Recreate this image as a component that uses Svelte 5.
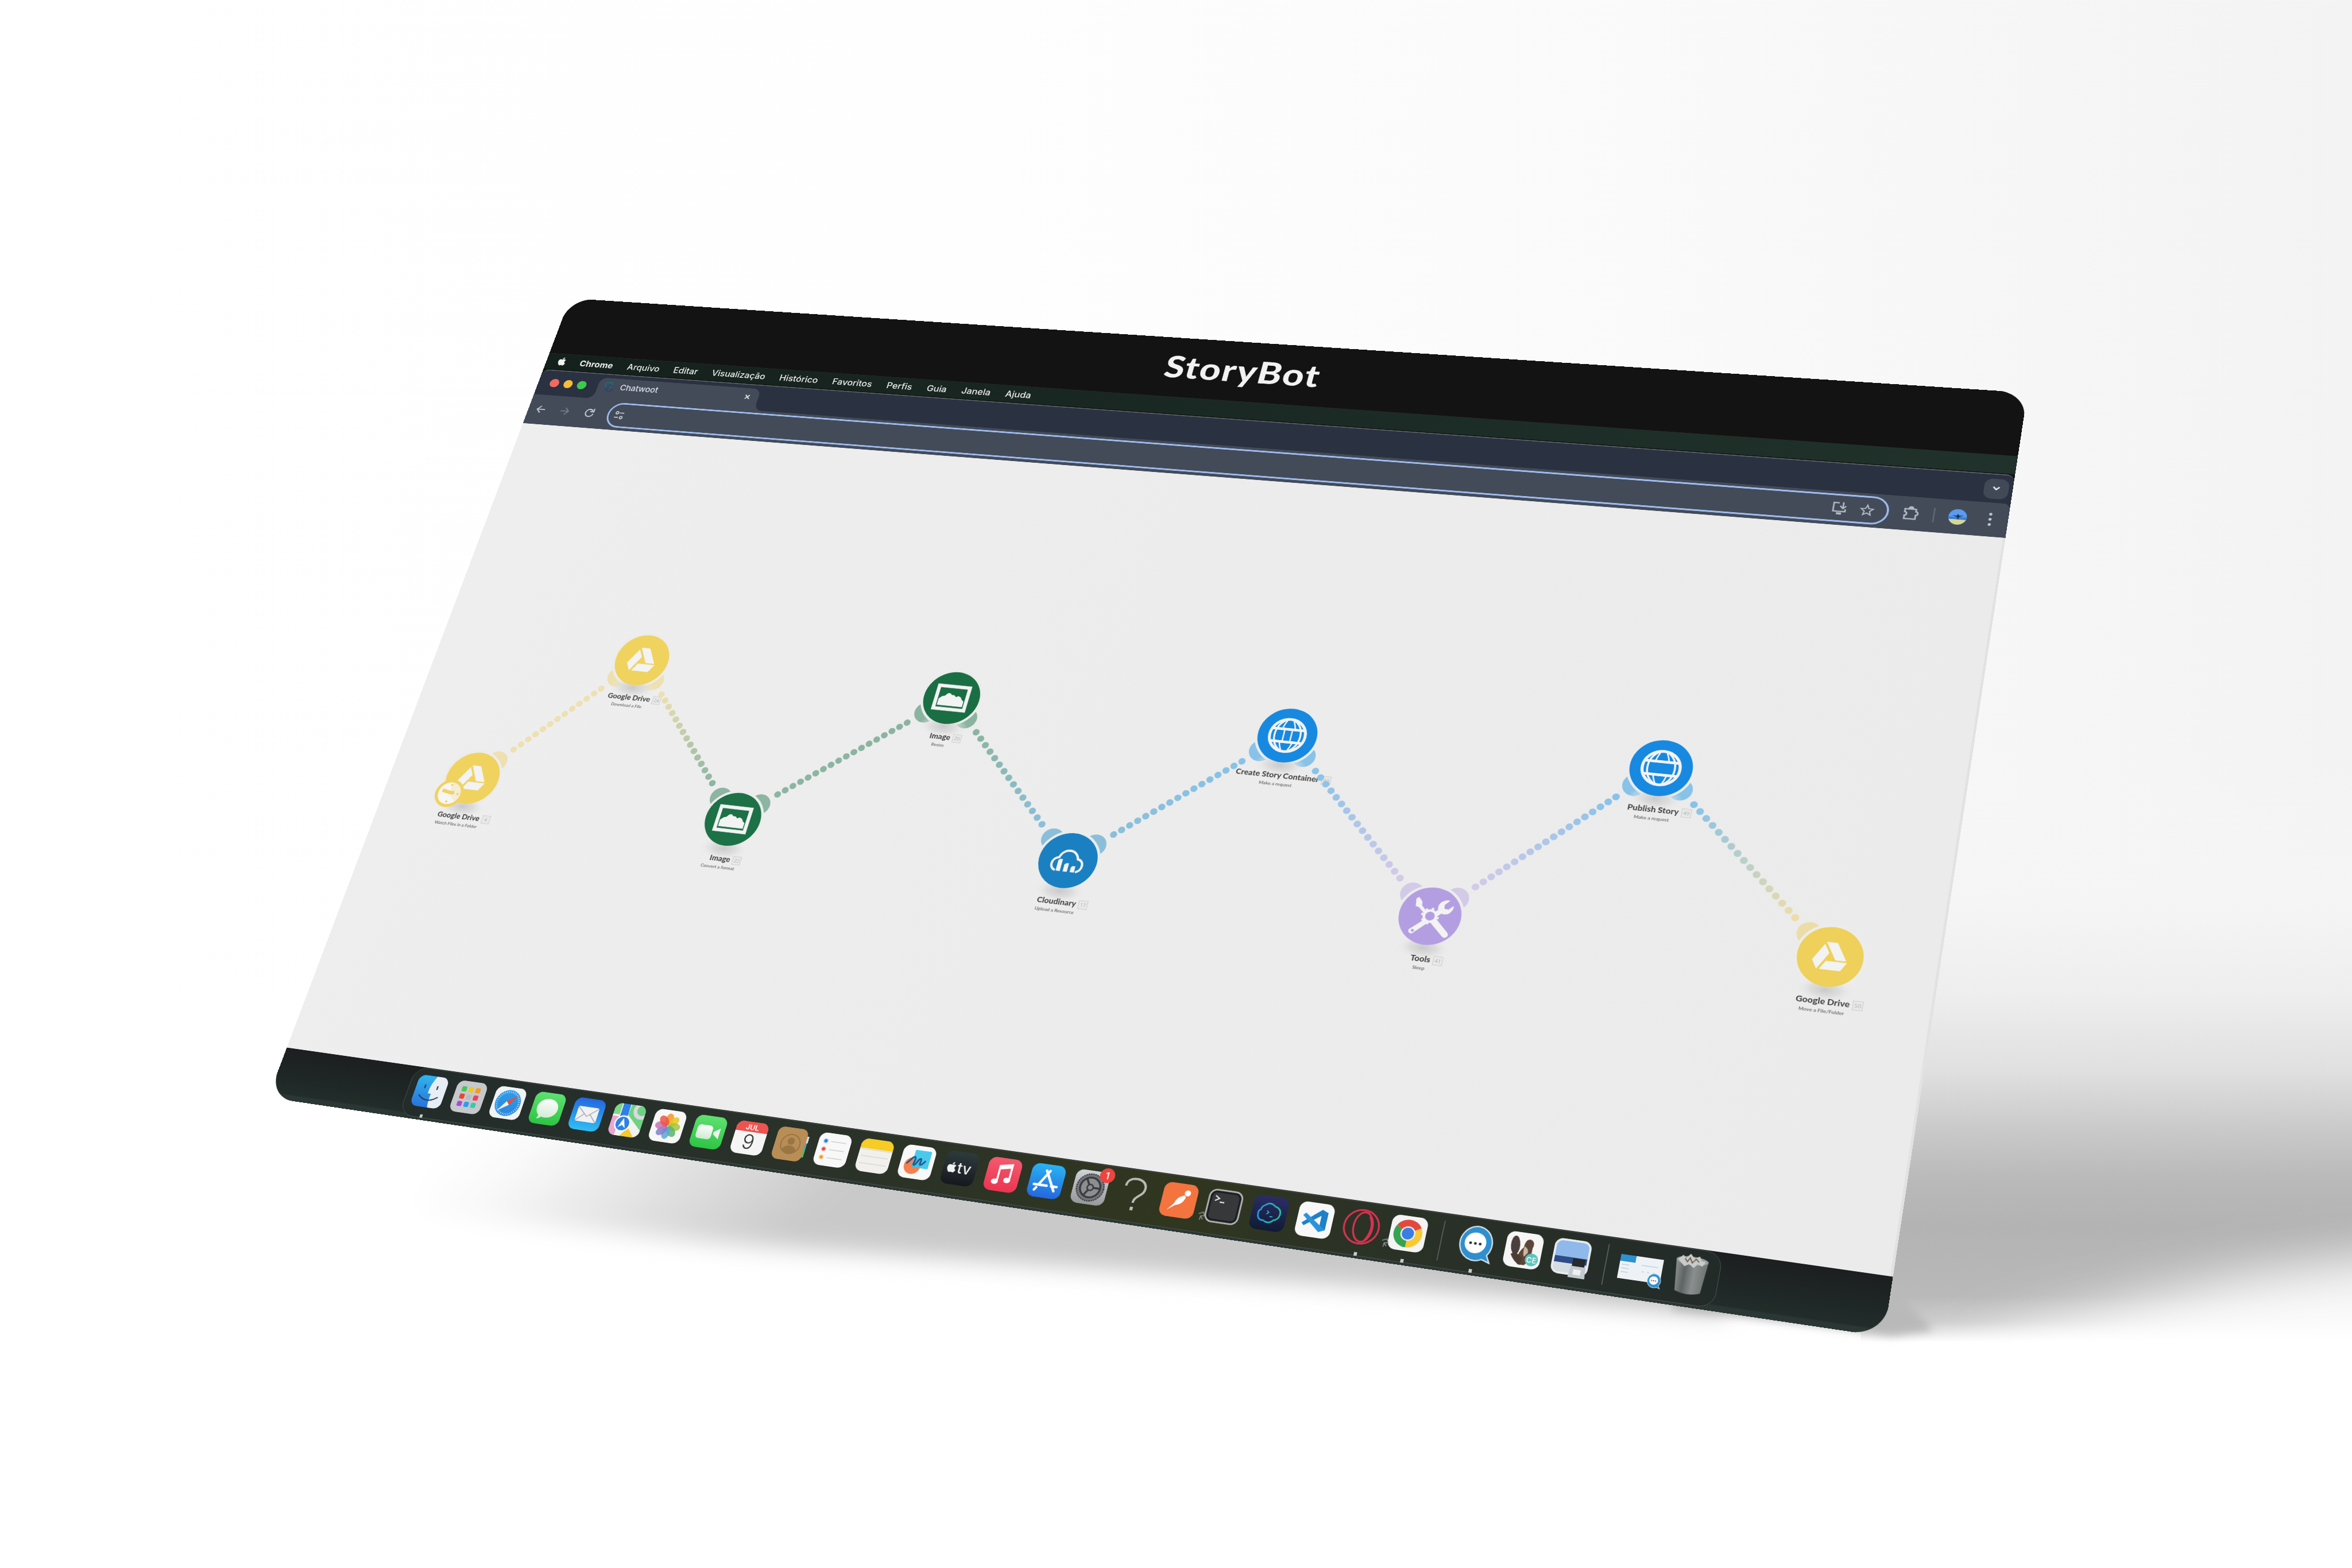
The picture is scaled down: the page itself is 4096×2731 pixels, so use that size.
<script>
  // Flat size of the tilted display
  const W = 3280;
  const H = 2000;
  const SCALE = 4096 / 4500;
  const TOP = 343.5;

  // Corner positions of the display inside the 4500 x 3000 scene: TL, TR, BR, BL
  const corners = [
    [1090.9, 570.8],
    [3879.3, 751.5],
    [3604.3, 2557.6],
    [512.8, 2100.0]
  ].map(([x, y]) => [x * SCALE, y * SCALE]);

  // Projective mapping of the W x H rectangle on the four corners
  function projection([[x0, y0], [x1, y1], [x2, y2], [x3, y3]]) {
    const dx1 = x1 - x2, dx2 = x3 - x2, sx = x0 - x1 + x2 - x3;
    const dy1 = y1 - y2, dy2 = y3 - y2, sy = y0 - y1 + y2 - y3;
    const den = dx1 * dy2 - dx2 * dy1;
    const g = (sx * dy2 - dx2 * sy) / den;
    const h = (dx1 * sy - sx * dy1) / den;
    const a = x1 - x0 + g * x1, b = x3 - x0 + h * x3;
    const d = y1 - y0 + g * y1, e = y3 - y0 + h * y3;
    return `matrix3d(${[a / W, d / W, 0, g / W, b / H, e / H, 0, h / H, 0, 0, 1, 0, x0, y0, 0, 1].map((n) => n.toFixed(10)).join(',')})`;
  }
  const transform = projection(corners);

  const menus = ['Arquivo', 'Editar', 'Visualização', 'Histórico', 'Favoritos', 'Perfis', 'Guia', 'Janela', 'Ajuda'];

  const nodes = [
    { x: 194.7, y: 1233, c: '#f0d25f', l: '#eee0b0', icon: 'drive', name: 'Google Drive', sub: 'Watch Files in a Folder', n: 4, clock: true },
    { x: 488.2, y: 912, c: '#f0d25f', l: '#eee0b0', icon: 'drive', name: 'Google Drive', sub: 'Download a File', n: 24 },
    { x: 813.4, y: 1259.2, c: '#1c7147', l: '#8cb5a2', icon: 'image', name: 'Image', sub: 'Convert a format', n: 22 },
    { x: 1208.2, y: 928, c: '#1a6e43', l: '#8bb4a0', icon: 'image', name: 'Image', sub: 'Resize', n: 20 },
    { x: 1554.9, y: 1265.8, c: '#1a80c1', l: '#8bbfd9', icon: 'cloud', name: 'Cloudinary', sub: 'Upload a Resource', n: 17 },
    { x: 1939, y: 936.4, c: '#1789e1', l: '#88c2e8', icon: 'globe', mid: true, name: 'Create Story Container', sub: 'Make a request', n: 40 },
    { x: 2309.5, y: 1295.4, c: '#b49ee2', l: '#d3cae8', icon: 'tools', name: 'Tools', sub: 'Sleep', n: 41 },
    { x: 2696.7, y: 925.4, c: '#1789e1', l: '#88c2e8', icon: 'globe', name: 'Publish Story', sub: 'Make a request', n: 49 },
    { x: 3078.2, y: 1283.9, c: '#eed05a', l: '#ecdda8', icon: 'drive', name: 'Google Drive', sub: 'Move a File/Folder', n: 50 }
  ].map((n) => ({ ...n, y: n.y - TOP }));

  const steps = [12, 14, 17, 14, 16, 16, 18, 16];

  function mix(a, b, t) {
    const p = (s, i) => parseInt(s.slice(i, i + 2), 16);
    return `rgb(${[1, 3, 5].map((i) => Math.round(p(a, i) + (p(b, i) - p(a, i)) * t)).join(',')})`;
  }

  const lobes = [];
  const dots = [];
  steps.forEach((count, i) => {
    const p = nodes[i], q = nodes[i + 1];
    const len = Math.hypot(q.x - p.x, q.y - p.y);
    const ux = (q.x - p.x) / len, uy = (q.y - p.y) / len;
    lobes.push({ x: p.x + ux * 62, y: p.y + uy * 62, c: p.l }, { x: q.x - ux * 62, y: q.y - uy * 62, c: q.l });
    for (let k = 0; k <= count; k++) {
      const t = k / count;
      const d = 105 + (len - 210) * t;
      dots.push({ x: p.x + ux * d, y: p.y + uy * d, c: mix(p.l, q.l, t) });
    }
  });

  const dock = [
    'finder*', 'launchpad', 'safari', 'messages', 'mail', 'maps', 'photos', 'facetime', 'calendar', 'contacts',
    'reminders', 'notes', 'freeform', 'tv', 'music', 'appstore', 'settings', 'unknown', 'postman', 'terminal',
    'termius', 'vscode', 'opera*', 'chrome*', '|', 'chat*', 'beaver', 'preview', '|', 'window', 'trash'
  ].map((s) => ({ id: s.replace('*', ''), run: s.endsWith('*') }));

  const pads = ['#43c759', '#f5c51b', '#f39a26', '#ea4438', '#b9bcc2', '#ef4063', '#a54be0', '#2f9bf0', '#35cfa0'];
  const petals = ['#f7941e', '#e8c51d', '#a6c63c', '#5cb56a', '#5aa7d6', '#7d80cc', '#c276b4', '#ee5448'];
  const ticks = Array.from({ length: 36 }, (_, i) => i * 10);
</script>

{#snippet apple()}
  <path d="M17.05 20.28c-.98.95-2.05.8-3.08.35-1.09-.46-2.09-.48-3.24 0-1.44.62-2.2.44-3.06-.35C2.79 15.25 3.51 7.59 9.05 7.31c1.35.07 2.29.74 3.08.8 1.18-.24 2.31-.93 3.57-.84 1.51.12 2.65.72 3.4 1.8-3.12 1.87-2.38 5.98.48 7.13-.57 1.5-1.31 2.99-2.54 4.09zM12.03 7.25c-.15-2.23 1.66-4.07 3.74-4.25.29 2.58-2.34 4.5-3.74 4.25z" />
{/snippet}

{#snippet bubble()}
  <path d="M33 1a31 33 0 0 1 25 53l7 14-15-5A31 33 0 1 1 33 1z" fill="#2f8fce" stroke="#d6e4ec" stroke-width="2.500" />
  <circle cx="33" cy="33" r="20" fill="#fff" />
  <g fill="#26323c"><circle cx="24" cy="34" r="2.600" /><circle cx="33" cy="34" r="2.600" /><circle cx="42" cy="34" r="2.600" /></g>
{/snippet}

{#snippet clip()}
  <path d="M-11 54l9-4 3 7-7 1-1 8M-7 58l6 6" fill="none" stroke="#8b8f8c" stroke-width="1.800" />
{/snippet}

{#snippet glyph(node)}
  {#if node.icon === 'drive'}
    <path fill="#f3f3f3" transform="scale(3) translate(-12 -12)" d="M7.71 3.5L1.15 15l3.43 6 6.55-11.5zM9.73 15L6.3 21h13.12l3.43-6zM22.28 14L15.42 2H8.58l6.85 12z" />
  {:else if node.icon === 'image'}
    <rect x="-34" y="-27" width="68" height="54" fill="none" stroke="#f3f3f3" stroke-width="8" />
    <path fill="#f3f3f3" d="M-28 19V4l6-6 6-2 5-6 5-1 5 4 5 0 5 4 5-3 6 3 3 5 5 4v13z" />
  {:else if node.icon === 'cloud'}
    <path fill="none" stroke="#f3f3f3" stroke-width="5" stroke-linecap="round" stroke-linejoin="round" d="M-24 23c-7-3-9-10-8-16 1-7 6-11 12-12 3-10 10-17 20-17 10 0 18 7 20 17 8 1 12 7 12 14 0 7-4 12-9 14" />
    <g fill="#f3f3f3"><path d="M-20 25V1l4-3h5v27zM-5 25V9l4-3h5v19zM10 25V14l3-3h6v14z" /></g>
  {:else if node.icon === 'globe'}
    <g fill="none" stroke="#f3f3f3" stroke-width="4">
      <circle r="37" stroke-width="6" />
      <path d="M-34-14H34M-34 15H34" stroke-width="6" />
      <ellipse rx="27" ry="36" />
      <path d="M-7-33q-4 8-6 17M7-33q4 8 6 17M-13 17q2 9 6 16M13 17q-2 9-6 16" stroke-width="3" />
      {#if node.mid}<path d="M-8-14V15M8-14V15" stroke-width="3" />{/if}
    </g>
  {:else}
    <g fill="#f3f3f3">
      <path d="M-34-34l5-4 8 9 1 8 12 13-4 4-13-12-7-2z" />
      <path d="M-10 9l7 7-23 23q-4 4-8 0t0-8zM-31 34a3 3 0 1 0 6 0a3 3 0 1 0-6 0" fill-rule="evenodd" />
      <path d="M11 2L3-6 13-15q-3-13 6-19 7-5 14-3l-9 10 1 8 8 1 9-9q2 8-4 15-6 7-17 4z" />
      <path d="M3 13l10-9 28 27q4 5 0 9t-9 0z" />
    </g>
    <circle r="12" fill="#b49ee2" stroke="#f3f3f3" stroke-width="5" />
    <circle r="16" fill="none" stroke="#f3f3f3" stroke-width="4" stroke-dasharray="5 7.56" />
  {/if}
{/snippet}

{#snippet appIcon(id)}
  {#if id === 'finder'}
    <g clip-path="url(#tile)">
      <rect width="68" height="68" fill="url(#gFinder)" />
      <path d="M40 0C33 14 30 26 31 38h7c-1 10 0 20 2 30h28V0z" fill="#e9edf4" />
      <path d="M13 44q21 17 42 0" fill="none" stroke="#26405c" stroke-width="2.6" stroke-linecap="round" />
      <path d="M20 21v6M48 21v6" stroke="#26405c" stroke-width="3" stroke-linecap="round" />
    </g>
  {:else if id === 'launchpad'}
    <rect width="68" height="68" rx="15" fill="#c6c8cb" />
    {#each pads as c, i}<rect x={13 + (i % 3) * 15.5} y={12 + Math.floor(i / 3) * 16} width="11" height="11" rx="3" fill={c} />{/each}
  {:else if id === 'safari'}
    <rect width="68" height="68" rx="15" fill="#f1f2f4" />
    <circle cx="34" cy="34" r="28" fill="url(#gSafari)" />
    {#each ticks as t}<path d="M34 8v4" stroke="#d8efff" stroke-width="1.2" transform="rotate({t} 34 34)" />{/each}
    <path d="M53 15L37.500 37.500 30.500 30.500z" fill="#ee4a40" /><path d="M15 53L30.500 30.500 37.500 37.500z" fill="#f4f4f4" />
  {:else if id === 'messages'}
    <rect width="68" height="68" rx="15" fill="url(#gGreen)" />
    <path d="M34 13c13 0 23 8.500 23 20s-10 20-23 20c-3 0-5 0-8-1-2 3-6 5-10 5 2-2 3-5 3-8-5-4-8-9-8-16 0-11.500 10-20 23-20z" fill="url(#gWhite)" />
  {:else if id === 'mail'}
    <rect width="68" height="68" rx="15" fill="url(#gMail)" />
    <rect x="11" y="18" width="46" height="32" rx="4" fill="#f0f1f2" />
    <path d="M12 20l22 18 22-18M12 49l16-16M56 49L40 33" fill="none" stroke="#a9adb3" stroke-width="1.8" />
  {:else if id === 'maps'}
    <g clip-path="url(#tile)">
      <rect width="68" height="68" fill="#f2f2ef" />
      <path d="M0 0h14v24H0z" fill="#7ed886" /><path d="M0 28h16v40H0z" fill="#e8a6d3" />
      <path d="M34 0h34v52L32 22z" fill="#6fd282" />
      <circle cx="60" cy="10" r="15" fill="none" stroke="#d7dade" stroke-width="8" />
      <path d="M16 0h16v36H16z" fill="#2f7fe6" />
      <path d="M28 68l12-20 18 20z" fill="#f6c92c" />
      <circle cx="26" cy="42" r="16" fill="#2b82e8" stroke="#fff" stroke-width="3" />
      <path d="M26 30l8 21-8-6-8 6z" fill="#fff" />
    </g>
  {:else if id === 'photos'}
    <rect width="68" height="68" rx="15" fill="#f7f7f7" />
    {#each petals as c, i}<ellipse cx="34" cy="20" rx="8.500" ry="13" fill={c} opacity=".85" transform="rotate({i * 45} 34 34)" />{/each}
  {:else if id === 'facetime'}
    <rect width="68" height="68" rx="15" fill="url(#gGreen)" />
    <rect x="9" y="20" width="33" height="29" rx="7" fill="url(#gWhite)" /><path d="M45 32l13-9v23l-13-9z" fill="#eef5ee" />
  {:else if id === 'calendar'}
    <g clip-path="url(#tile)">
      <rect width="68" height="68" fill="#f5f5f5" /><rect width="68" height="21" fill="#ee5350" />
      <text x="34" y="17" text-anchor="middle" class="cal-month">JUL</text>
      <text x="34" y="57" text-anchor="middle" class="cal-day">9</text>
    </g>
  {:else if id === 'contacts'}
    <path d="M60 14h8v14h-8z" fill="#d9d9d9" /><path d="M60 28h7v14h-7z" fill="#35a7e0" /><path d="M60 42h7v16h-7z" fill="#3cc560" />
    <rect width="64" height="68" rx="14" fill="#b98d56" />
    <circle cx="33" cy="34" r="20" fill="none" stroke="#92703f" stroke-width="2" />
    <circle cx="33" cy="28" r="7.500" fill="#9a7645" /><path d="M18 47q4-10 15-10t15 10q-6 7-15 7t-15-7z" fill="#9a7645" />
  {:else if id === 'reminders'}
    <rect width="68" height="68" rx="15" fill="#f8f8f8" />
    <g stroke="#c9c9cc" stroke-width="1.500"><path d="M26 17h32M26 34h32M26 51h32" /></g>
    <circle cx="15" cy="17" r="4.500" fill="#2d7ce8" stroke="#c4d9f6" stroke-width="2" /><circle cx="15" cy="34" r="4.500" fill="#e8483f" stroke="#f6cbc8" stroke-width="2" /><circle cx="15" cy="51" r="4.500" fill="#f39b2a" stroke="#f8e0be" stroke-width="2" />
  {:else if id === 'notes'}
    <g clip-path="url(#tile)">
      <rect width="68" height="68" fill="#f1f0ec" /><rect width="68" height="20" fill="#f6cc25" />
      <path d="M0 22h68M6 36h56M6 51h56" stroke="#d6d4cd" stroke-width="1.500" />
    </g>
  {:else if id === 'freeform'}
    <rect width="68" height="68" rx="15" fill="#f8f8f8" />
    <circle cx="26" cy="42" r="17" fill="#f4804f" /><rect x="25" y="9" width="34" height="36" rx="2" fill="#35c4ea" opacity=".9" />
    <path d="M14 38c5-5 10-17 14-14s-3 16 1 16 7-15 11-14-2 12 2 12 5-4 8-8" fill="none" stroke="#23568c" stroke-width="3.500" stroke-linecap="round" />
  {:else if id === 'tv'}
    <rect width="68" height="68" rx="15" fill="url(#gTv)" />
    <g fill="#f2f2f2" transform="translate(3 19) scale(1.180)">{@render apple()}</g>
    <text x="29" y="44" class="tv">tv</text>
  {:else if id === 'music'}
    <rect width="68" height="68" rx="15" fill="url(#gMusic)" />
    <path d="M25 48V17l24-5v31" fill="none" stroke="#fff" stroke-width="4" /><path d="M25 21l24-5" stroke="#fff" stroke-width="6" />
    <ellipse cx="20.500" cy="49" rx="7" ry="5.500" fill="#fff" /><ellipse cx="44.500" cy="44" rx="7" ry="5.500" fill="#fff" />
  {:else if id === 'appstore'}
    <rect width="68" height="68" rx="15" fill="url(#gStore)" />
    <path d="M37 13L20 43M30 13l23 39M11 43h26M46 43h11M17 49l-3 5" fill="none" stroke="#fff" stroke-width="5" stroke-linecap="round" />
  {:else if id === 'settings'}
    <rect width="68" height="68" rx="15" fill="url(#gSettings)" />
    <circle cx="34" cy="34" r="27" fill="#77797c" stroke="#3d3f42" stroke-width="3" stroke-dasharray="3 1.500" />
    <circle cx="34" cy="34" r="20" fill="#8c8e90" stroke="#3a3c3f" stroke-width="4" />
    <circle cx="34" cy="34" r="6" fill="none" stroke="#3a3c3f" stroke-width="3" /><path d="M40 34h14M31 39l-7 12M31 29l-7-12" stroke="#3a3c3f" stroke-width="4" />
    <circle cx="62" cy="6" r="15" fill="#ec4540" /><text x="62" y="13" text-anchor="middle" class="count">1</text>
  {:else if id === 'unknown'}
    <path d="M14 20C14 8 23 4 33 4s20 6 20 17c0 16-18 15-18 31" fill="none" stroke="#b9bcb7" stroke-width="4.500" /><rect x="32" y="60" width="6" height="7" fill="#b9bcb7" />
  {:else if id === 'postman'}
    <rect width="68" height="68" rx="15" fill="#f3743f" />
    <circle cx="48" cy="18" r="6" fill="#fff" /><path d="M43 23q-14 4-17 18L14 56l15-12q14-3 17-18z" fill="#fff" />
  {:else if id === 'terminal'}
    <rect x="2" y="2" width="64" height="64" rx="14" fill="#37383a" stroke="#b6b8b9" stroke-width="3" /><rect x="6" y="6" width="56" height="56" rx="10" fill="none" stroke="#1a1b1d" stroke-width="3" />
    <path d="M14 14l8 5-8 5" fill="none" stroke="#e8e8e8" stroke-width="2.500" /><path d="M24 26h9" stroke="#e8e8e8" stroke-width="2.500" />
    {@render clip()}
  {:else if id === 'termius'}
    <rect width="68" height="68" rx="15" fill="url(#gTermius)" />
    <path d="M23 19q9-9 20 0 13 3 12 15-1 10-10 12-8 10-19 3-12 1-13-11-1-8 4-10 0-6 6-9z" fill="none" stroke="url(#gCloud)" stroke-width="3" />
    <path d="M29 29l4 3-4 4M36 40h6" fill="none" stroke="#2fb4cf" stroke-width="2" />
  {:else if id === 'vscode'}
    <rect width="68" height="68" rx="15" fill="#f8f8f8" />
    <path d="M45 12l12 5v34l-12 5V24L15 47l-5-5z" fill="#1f80c6" /><path d="M10 27l5-5 42 29-12 5z" fill="#2a93da" />
  {:else if id === 'opera'}
    <g fill="none" stroke="#d9324f"><circle cx="34" cy="34" r="33" stroke-width="3.500" /><ellipse cx="37" cy="34" rx="18" ry="29" stroke-width="3.500" /><path d="M46 12q14 22-2 48" stroke-width="3" /></g>
  {:else if id === 'chrome'}
    <rect width="68" height="68" rx="15" fill="#f4f4f4" />
    <path d="M34 34L10.600 20.500A27 27 0 0 1 57.400 20.500z" fill="#e2493d" /><path d="M34 34V61A27 27 0 0 1 10.600 20.500z" fill="#35a352" /><path d="M34 34L57.400 20.500A27 27 0 0 1 34 61z" fill="#f8c932" />
    <circle cx="34" cy="34" r="14" fill="#f4f4f4" /><circle cx="34" cy="34" r="11.500" fill="#3b7de2" />
    {@render clip()}
  {:else if id === 'chat'}
    {@render bubble()}
  {:else if id === 'beaver'}
    <rect width="68" height="68" rx="15" fill="#f6f6f5" />
    <ellipse cx="18" cy="26" rx="8.500" ry="18" fill="#4a3f3c" transform="rotate(-6 18 26)" />
    <path d="M28 62c-6-12-2-24 6-34 0-10 4-17 10-16 7 1 9 9 6 16 1 12-2 27-10 34z" fill="#5d4637" /><path d="M35 26q8 3 8 12l-6 8q-4-8-2-20z" fill="#c9b7a4" />
    <path d="M12 44q8 14 20 19l2-14-14-10z" fill="#4c3c33" />
    <circle cx="52" cy="50" r="12" fill="#5cc3bd" /><text x="52" y="56" text-anchor="middle" class="ce">CE</text>
  {:else if id === 'preview'}
    <rect width="68" height="68" rx="15" fill="#e9ebee" />
    <g clip-path="url(#photo)"><rect width="68" height="68" fill="#8fb9ea" /><rect y="34" width="68" height="13" fill="#2d4c88" /><rect y="46" width="68" height="22" fill="#d6dde2" /></g>
    <path d="M38 35h23v15H38z" fill="#26292d" /><path d="M36 50h27l2 22H34z" fill="#c4c9cd" /><path d="M42 56h14v10H42z" fill="#eef0f2" />
  {:else if id === 'window'}
    <rect x="-6" y="14" width="78" height="46" fill="#eef2f6" /><rect x="-6" y="14" width="28" height="13" fill="#2c92d2" />
    <g stroke="#c9d6e2" stroke-width="2"><path d="M-2 33h14M-2 40h14M-2 47h14M34 30h30M36 42h4M46 42h4M56 42h4" /></g>
    <g transform="translate(47 42) scale(.4)">{@render bubble()}</g>
  {:else if id === 'trash'}
    <path d="M5 6h58L57 67q-23 9-46 0z" fill="url(#gTrash)" />
    <ellipse cx="34" cy="8" rx="29" ry="8" fill="#9aa0a1" />
    <path d="M8 8l8-9 6 5 7-9 8 8 9-5 4 8 8 1-5 9-9-3-6 8-9-6-8 5-8-7z" fill="#c9cbc8" /><path d="M20 5l5 6 4-8 5 9 6-8 6 5" fill="none" stroke="#6d5a4f" stroke-width="2" />
  {/if}
{/snippet}

<main class="scene">
  <svg class="backdrop" viewBox="0 0 4500 3000" aria-hidden="true">
    <defs>
      <linearGradient id="wall"><stop offset="0" stop-color="#fff" /><stop offset=".42" stop-color="#fefefe" /><stop offset=".7" stop-color="#fafafa" /><stop offset="1" stop-color="#f3f3f3" /></linearGradient>
      <linearGradient id="floor" gradientUnits="userSpaceOnUse" x1="0" y1="1460" x2="0" y2="2568">
        <stop offset="0" stop-color="#f6f6f6" stop-opacity="0" /><stop offset=".24" stop-color="#f5f5f5" /><stop offset=".4" stop-color="#eeeeee" /><stop offset=".53" stop-color="#e0e0e0" />
        <stop offset=".64" stop-color="#c8c8c8" /><stop offset=".72" stop-color="#b9b9b9" /><stop offset=".8" stop-color="#b3b3b3" /><stop offset=".92" stop-color="#b9b9b9" /><stop offset=".965" stop-color="#cecece" /><stop offset="1" stop-color="#fff" />
      </linearGradient>
      <linearGradient id="under" gradientUnits="userSpaceOnUse" x1="930" y1="2090" x2="1330" y2="2530"><stop offset="0" stop-color="#fcfcfc" stop-opacity="0" /><stop offset=".45" stop-color="#ebebeb" /><stop offset="1" stop-color="#c9c9c9" /></linearGradient>
      <linearGradient id="deep" gradientUnits="userSpaceOnUse" x1="2600" y1="0" x2="3500" y2="0"><stop offset="0" stop-opacity="0" /><stop offset="1" stop-opacity=".09" /></linearGradient>
      <filter id="soft" x="-20%" y="-50%" width="140%" height="200%"><feGaussianBlur stdDeviation="22" /></filter>
      <filter id="softer" x="-30%" y="-80%" width="160%" height="260%"><feGaussianBlur stdDeviation="48" /></filter>
      <filter id="tight" x="-20%" y="-80%" width="140%" height="260%"><feGaussianBlur stdDeviation="8" /></filter>
      <clipPath id="wallClip"><rect y="0" width="4500" height="2568" /></clipPath>
    </defs>
    <rect width="4500" height="3000" fill="#fff" />
    <rect x="0" y="0" width="4500" height="1900" fill="url(#wall)" />
    <rect x="3000" y="1460" width="1500" height="1108" fill="url(#floor)" />
    <g clip-path="url(#wallClip)"><path d="M3600 2680L3850 2550 4100 2484 4300 2440 4700 2385V2680z" fill="#fff" filter="url(#softer)" opacity=".9" /></g>
    <path d="M0 1900H3560V2570H0z" fill="#fff" />
    <g filter="url(#soft)">
      <path d="M800 2320L1365 2378 2130 2430 2896 2482 3300 2516 3300 2400 2000 2180 1300 2100 800 2050z" fill="url(#under)" />
      <path d="M2130 2430L2896 2482 3300 2516V2400L2130 2200z" fill="url(#deep)" />
    </g>
    <path d="M3200 2506L3450 2534 3620 2556 3700 2545 3600 2440 3200 2400z" fill="#b9b9b9" filter="url(#tight)" />
  </svg>

  <section class="device" style:transform>
    <header class="bezel"><h1>StoryBot</h1></header>

    <nav class="menubar">
      <svg class="apple" viewBox="3 2 18 20" fill="#f1f3f2">{@render apple()}</svg>
      <b>Chrome</b>
      {#each menus as m}<span>{m}</span>{/each}
    </nav>

    <div class="browser">
      <div class="tabs">
        <div class="lights"><i class="red"></i><i class="yellow"></i><i class="green"></i></div>
        <div class="tab">
          <svg width="24" height="26" viewBox="0 0 24 26" fill="none" stroke-width="2.500"><path d="M10 13H6a4 4 0 0 1-4-4V6a4 4 0 0 1 4-4h12v11h-5" stroke="#1f6f73" /><path d="M20 11a8 8 0 1 0 2 11v-4" stroke="#27407e" /></svg>
          <span>Chatwoot</span>
          <svg class="close" width="14" height="14" viewBox="0 0 14 14" stroke="#dfe3ea" stroke-width="2.600"><path d="M2 2l10 10M12 2L2 12" /></svg>
        </div>
        <div class="chevron"><svg width="18" height="12" viewBox="0 0 18 12" fill="none" stroke="#dfe3ea" stroke-width="3.200"><path d="M3 2l6 6 6-6" /></svg></div>
      </div>
      <div class="toolbar">
        <div class="nav">
          <svg width="24" height="24" viewBox="0 0 24 24" fill="none" stroke="#c3c9d3" stroke-width="2.600"><path d="M23 12H3M12 3l-9 9 9 9" /></svg>
          <svg width="24" height="24" viewBox="0 0 24 24" fill="none" stroke="#757e8d" stroke-width="2.600"><path d="M1 12h20M12 3l9 9-9 9" /></svg>
          <svg width="26" height="26" viewBox="0 0 26 26" fill="none" stroke="#c3c9d3" stroke-width="2.800"><path d="M22 14.500A9.500 9.500 0 1 1 20 7" /><path d="M22.500 1v8.500H14" /></svg>
        </div>
        <div class="omnibox">
          <svg width="24" height="24" viewBox="0 0 24 24" fill="none" stroke="#c8cdd6" stroke-width="2.600"><circle cx="6" cy="6" r="3.200" /><path d="M12 6h11M1 18h10" /><circle cx="18" cy="18" r="3.200" /></svg>
          <span class="grow"></span>
          <svg width="32" height="32" viewBox="0 0 32 32" fill="none" stroke="#b3bac5" stroke-width="3"><path d="M15 4H4v20h24v-6M23 2v14M17 11l6 6 6-6" /><path d="M11 29h10" stroke-width="5" /></svg>
          <svg width="30" height="30" viewBox="0 0 24 24" fill="none" stroke="#b3bac5" stroke-width="2"><path d="M12 3l2.700 6.300 6.800.6-5.200 4.500 1.600 6.700L12 17.500 6.100 21.100l1.600-6.700L2.500 9.900l6.800-.6z" /></svg>
        </div>
        <div class="tools">
          <svg width="34" height="34" viewBox="0 0 34 34" fill="none" stroke="#b3bac5" stroke-width="3.200"><path d="M5 7h22v6q4 0 4 4t-4 4v9H5v-8q4 0 4-4t-4-4z" /><path d="M13 6q0-4 4-4t4 4" fill="#b3bac5" /></svg>
          <i class="rule"></i>
          <svg width="36" height="36" viewBox="0 0 36 36"><clipPath id="ava"><circle cx="18" cy="18" r="18" /></clipPath><g clip-path="url(#ava)"><rect width="36" height="36" fill="#5b9bf0" /><rect y="18" width="36" height="7" fill="#3f80d0" /><rect y="24" width="36" height="12" fill="#d6d795" /><path d="M7 15l9 0 2-4 3 4 9-1-9 4-2 6-3-6z" fill="#1c3354" /></g></svg>
          <svg class="more" width="8" height="34" viewBox="0 0 8 34" fill="#c3c9d3"><circle cx="4" cy="5" r="3" /><circle cx="4" cy="17" r="3" /><circle cx="4" cy="29" r="3" /></svg>
        </div>
      </div>
    </div>

    <div class="canvas">
      <svg class="layer" viewBox="0 0 3280 1544.500">
        <defs><radialGradient id="drop"><stop offset="0" stop-color="#c9c9c9" /><stop offset=".5" stop-color="#d9d9d9" stop-opacity=".8" /><stop offset="1" stop-color="#ececec" stop-opacity="0" /></radialGradient></defs>
        {#each lobes as l}<circle cx={l.x} cy={l.y} r="24" fill={l.c} />{/each}
        {#each nodes as n}
          <g transform="translate({n.x} {n.y})">
            <circle r="67" fill="#ececec" />
            <ellipse cy="68" rx="54" ry="26" fill="url(#drop)" />
            <circle r="61.500" fill={n.c} />
            {@render glyph(n)}
            {#if n.clock}
              <g transform="translate(-41 41)">
                <circle r="33" fill="#f0d25f" /><circle r="26" fill="#f7f6f2" /><path d="M0 0V-26A26 26 0 0 1 18 18z" fill="#f3ecd6" />
                <path d="M-17-2V-8l18 3h9v6H0z" fill="#f0d25f" stroke="#f0d25f" stroke-width="2" />
                <g fill="#f0d25f"><circle cy="-20" r="2.500" /><circle cx="20" r="2.500" /><circle cy="20" r="2.500" /></g>
              </g>
            {/if}
          </g>
        {/each}
      </svg>
      {#each nodes as n}
        <div class="label" style:left="{n.x}px" style:top="{n.y + 80}px">
          <strong>{n.name}<em>{n.n}</em></strong>
          <small>{n.sub}</small>
        </div>
      {/each}
      <svg class="layer" viewBox="0 0 3280 1544.500">
        {#each dots as d}<circle cx={d.x} cy={d.y} r="7.400" fill={d.c} />{/each}
      </svg>
    </div>

    <footer class="shelf">
      <svg class="defs" aria-hidden="true">
        <defs>
          <clipPath id="tile"><rect width="68" height="68" rx="15" /></clipPath>
          <clipPath id="photo"><rect x="4" y="4" width="60" height="60" rx="11" /></clipPath>
          <linearGradient id="gFinder" x2="0" y2="1"><stop stop-color="#30b4ee" /><stop offset="1" stop-color="#2a74dd" /></linearGradient>
          <linearGradient id="gSafari" x2="0" y2="1"><stop stop-color="#2f9de8" /><stop offset="1" stop-color="#2b86dc" /></linearGradient>
          <linearGradient id="gGreen" x2="0" y2="1"><stop stop-color="#5fe070" /><stop offset="1" stop-color="#2dc544" /></linearGradient>
          <linearGradient id="gWhite" x2="0" y2="1"><stop stop-color="#fdfdfd" /><stop offset="1" stop-color="#cfead2" /></linearGradient>
          <linearGradient id="gMail" x2="0" y2="1"><stop stop-color="#2468e0" /><stop offset="1" stop-color="#2fbef3" /></linearGradient>
          <linearGradient id="gTv" x2="0" y2="1"><stop stop-color="#2e3a3c" /><stop offset="1" stop-color="#15191f" /></linearGradient>
          <linearGradient id="gMusic" x2="0" y2="1"><stop stop-color="#f25a70" /><stop offset="1" stop-color="#ec3550" /></linearGradient>
          <linearGradient id="gStore" x2="0" y2="1"><stop stop-color="#29b2f2" /><stop offset="1" stop-color="#2467de" /></linearGradient>
          <linearGradient id="gSettings" x2="0" y2="1"><stop stop-color="#cfd4da" /><stop offset="1" stop-color="#97999b" /></linearGradient>
          <linearGradient id="gTermius" x2="0" y2="1"><stop stop-color="#2b2d66" /><stop offset="1" stop-color="#101b33" /></linearGradient>
          <linearGradient id="gCloud"><stop stop-color="#2a9be0" /><stop offset="1" stop-color="#27c69c" /></linearGradient>
          <linearGradient id="gTrash"><stop stop-color="#8d9291" /><stop offset=".3" stop-color="#5e6463" /><stop offset=".6" stop-color="#8a8f8e" /><stop offset="1" stop-color="#6e7473" /></linearGradient>
        </defs>
      </svg>
      <div class="dock">
        {#each dock as app}
          {#if app.id === '|'}
            <i class="sep"></i>
          {:else}
            <div class="app" class:running={app.run}>
              <svg width="68" height="68" viewBox="0 0 68 68">{@render appIcon(app.id)}</svg>
            </div>
          {/if}
        {/each}
      </div>
    </footer>
  </section>
</main>

<style>
  :global(body) { margin: 0; background: #fff; }
  .scene { position: relative; width: 4096px; height: 2731px; overflow: hidden; background: #fff; }
  .backdrop { position: absolute; inset: 0; width: 4096px; height: 2731px; }
  .device {
    position: relative; box-sizing: border-box; width: 3280px; height: 2000px; transform-origin: 0 0;
    display: flex; flex-direction: column; overflow: hidden; border-radius: 58px; background: #141414;
    font-family: Inter, "Liberation Sans", sans-serif;
  }
  .bezel { height: 152px; display: flex; align-items: center; justify-content: center; background: #131313; }
  h1 { margin: 0 0 6px; font: 900 77px/1 Lato, sans-serif; color: #f2f2f2; letter-spacing: 2.500px; transform: scaleX(1.07); }
  .menubar {
    height: 45px; display: flex; align-items: center; gap: 35px; padding-left: 28px; box-sizing: border-box;
    background: linear-gradient(90deg, #14201b, #1a2823 45%, #20322b); border-bottom: 2px solid #0f1512; border-top: 1px solid #262b29;
    color: #eceeed; font-size: 21.700px; font-weight: 500;
  }
  .menubar b { font-weight: 700; margin-right: 1.500px; }
  .apple { width: 22px; height: 27px; margin-top: -3px; }
  .browser { background: #2a3141; border-top: 2px solid #64686f; box-sizing: border-box; height: 146.500px; border-radius: 16px 16px 0 0; display: flex; flex-direction: column; }
  .tabs { height: 66px; display: flex; align-items: flex-end; padding: 0 8px 0 29px; }
  .lights { display: flex; gap: 12px; align-self: center; width: 121px; }
  .lights i { width: 22.500px; height: 22.500px; border-radius: 50%; }
  .red { background: #f4695f; } .yellow { background: #f5bd38; } .green { background: #3dc94e; }
  .tab {
    position: relative; width: 398px; height: 57px; box-sizing: border-box; padding: 0 20px 12px 16px; display: flex; align-items: center; gap: 16px;
    background: #434b59; border-radius: 18px 18px 0 0; color: #dde1e8; font-size: 20.500px; font-weight: 500;
  }
  .tab::before, .tab::after { content: ""; position: absolute; bottom: 0; width: 18px; height: 18px; }
  .tab::before { left: -18px; background: radial-gradient(circle at 0 0, transparent 17.500px, #434b59 18px); }
  .tab::after { right: -18px; background: radial-gradient(circle at 100% 0, transparent 17.500px, #434b59 18px); }
  .close { margin-left: auto; }
  .chevron { margin-left: auto; align-self: center; width: 48px; height: 47px; border-radius: 16px; background: #414856; display: flex; align-items: center; justify-content: center; }
  .toolbar { flex: 1; display: flex; align-items: center; background: #434b59; border-radius: 0 14px 0 0; }
  .nav { width: 199px; box-sizing: border-box; padding-left: 19px; display: flex; align-items: center; gap: 37px; }
  .omnibox {
    width: 2848px; height: 66px; box-sizing: border-box; border: 4.500px solid #9fbbee; border-radius: 33px; padding: 0 24px 0 13px;
    display: flex; align-items: center; gap: 24px; background: #434b59;
  }
  .grow { flex: 1; }
  .tools { flex: 1; display: flex; align-items: center; padding: 0 31px 0 26px; gap: 27px; }
  .more { margin-left: auto; }
  .rule { width: 2.500px; height: 34px; background: #5d6675; }
  .canvas { position: relative; height: 1544.500px; background: linear-gradient(100deg, #eeeeee, #ececec 55%, #ebebeb); box-shadow: inset -5px 0 0 #e2e2e2; }
  .layer { position: absolute; inset: 0; width: 3280px; height: 1544.500px; }
  .label { position: absolute; width: 0; display: flex; flex-direction: column; align-items: center; white-space: nowrap; color: #4a4a4a; font-family: Lato, sans-serif; }
  .label strong { position: relative; font-size: 17px; line-height: 24px; font-weight: 900; }
  .label em {
    position: absolute; left: 100%; top: 3px; margin-left: 5px; box-sizing: border-box; width: 20px; height: 20px; border: 2px solid #d8d8d8; background: #e9e9e9;
    font: 400 11px/16px "Open Sans", sans-serif; text-align: center; color: #b2b2b2;
  }
  .label small { font-size: 10px; line-height: 14px; color: #777; font-weight: 700; }
  .shelf { flex: 1; display: flex; justify-content: center; background: linear-gradient(180deg, #1c1f1f, #1f2826 60%, #222d2a 88%, #2b3734 91%, #2b3734); padding-top: 1px; }
  .defs { position: absolute; width: 0; height: 0; }
  .dock {
    height: 106px; width: 2675px; box-sizing: border-box; border: 1.500px solid #4d5350; border-radius: 30px; padding: 0 0 0 15px;
    display: flex; align-items: center; gap: 21.050px;
    background: linear-gradient(90deg, #232c2a, #2a3229 35%, #30361f 62%, #2b3226 75%, #232b29);
  }
  .app { position: relative; width: 68px; height: 68px; margin-top: -9px; flex: none; }
  .app svg { display: block; overflow: visible; }
  .running::after { content: ""; position: absolute; left: 31px; top: 84px; width: 6px; height: 7px; background: #c9ccca; }
  .sep { width: 2px; height: 78px; margin: 0 8.450px; background: #555b55; flex: none; }
  .cal-month { font: 600 15px Inter, sans-serif; fill: #fff; }
  .cal-day { font: 300 42px Inter, sans-serif; fill: #333; }
  .tv { font: 500 30px Inter, sans-serif; fill: #f2f2f2; }
  .count { font: 500 19px Inter, sans-serif; fill: #fff; }
  .ce { font: 600 14px Inter, sans-serif; fill: #e8faf8; }
</style>
